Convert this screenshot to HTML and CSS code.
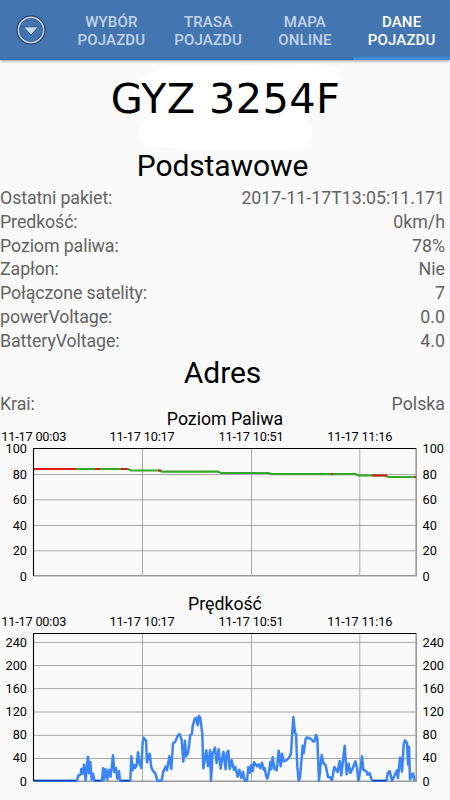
FILE: index.html
```html
<!DOCTYPE html>
<html lang="pl">
<head>
<meta charset="utf-8">
<title>Dane pojazdu</title>
<link rel="stylesheet" href="styles.css">
</head>
<body>
<header class="bar">
  <div class="menu">
    <svg width="32" height="32" viewBox="0 0 32 32">
      <circle cx="16" cy="16" r="12.8" fill="none" stroke="#1b3155" stroke-width="3.3"/>
      <circle cx="16" cy="16" r="12.6" fill="none" stroke="#c3d4e9" stroke-width="1.7"/>
      <path d="M8.5 12.8H23.5L16 21.2Z" fill="#c3d9ed" stroke="#294c78" stroke-width=".9"/>
    </svg>
  </div>
  <nav class="tabs">
    <a class="tab">WYBÓR<br>POJAZDU</a>
    <a class="tab">TRASA<br>POJAZDU</a>
    <a class="tab">MAPA<br>ONLINE</a>
    <a class="tab active">DANE<br>POJAZDU</a>
  </nav>
</header>
<main>
  <div class="plate">
    <svg class="patch" width="450" height="90" viewBox="0 60 450 90">
      <path d="M134 95C130 78 153 69 174 67L270 66Q315 62 330 66Q342 70 342 83Q342 95 318 97L314 110Q311 119 304 119Q312 123 312 134Q312 149 290 150H190Q178 147 151 147Q139 146 139 133Q139 120 150 117Q134 110 134 95Z" fill="#fff"/>
    </svg>
    <h1 class="number">GYZ 3254F</h1>
  </div>
  <h2 class="title">Podstawowe</h2>
  <dl class="list">
    <div class="row"><dt>Ostatni pakiet:</dt><dd>2017-11-17T13:05:11.171</dd></div>
    <div class="row"><dt>Predkość:</dt><dd>0km/h</dd></div>
    <div class="row"><dt>Poziom paliwa:</dt><dd>78%</dd></div>
    <div class="row"><dt>Zapłon:</dt><dd>Nie</dd></div>
    <div class="row"><dt>Połączone satelity:</dt><dd>7</dd></div>
    <div class="row"><dt>powerVoltage:</dt><dd>0.0</dd></div>
    <div class="row"><dt>BatteryVoltage:</dt><dd>4.0</dd></div>
  </dl>
  <h2 class="title address">Adres</h2>
  <dl class="list country">
    <div class="row"><dt>Krai:</dt><dd>Polska</dd></div>
  </dl>
  <svg class="chart" width="450" height="180" viewBox="0 410 450 180">
    <text class="name" x="225" y="425">Poziom Paliwa</text>
    <g class="time"><text x="33.7" y="441">11-17 00:03</text><text x="142" y="441">11-17 10:17</text><text x="251" y="441">11-17 10:51</text><text x="359.7" y="441">11-17 11:16</text></g>
    <g class="left"><text x="27" y="453">100</text><text x="27" y="478.5">80</text><text x="27" y="504">60</text><text x="27" y="529.5">40</text><text x="27" y="555">20</text><text x="27" y="580.5">0</text></g>
    <g class="right"><text x="422.5" y="453">100</text><text x="422.5" y="478.5">80</text><text x="422.5" y="504">60</text><text x="422.5" y="529.5">40</text><text x="422.5" y="555">20</text><text x="422.5" y="580.5">0</text></g>
    <path class="grid" d="M34 474.5H416M34 499.8H416M34 525.5H416M34 550.8H416M142.5 449V575M251.5 449V575M359.8 449V575"/>
    <path class="edge" d="M33 575.7H416.2V448"/>
    <path class="frame" d="M33.5 576V448.5H416"/>
    <path class="fuel" d="M34 469H128L131 470.5H160L162 471.7H218L221 473H269L271 474.1H356L358 475.5H386L388 477H416"/>
    <path class="fuel off" d="M34 469H76M95 469H100M121 469H127.5M158 470.5H161M331 474.1H332.5M372 475.5H387M414.5 477H416"/>
  </svg>
  <svg class="chart" width="450" height="210" viewBox="0 590 450 210">
    <text class="name" x="225" y="610">Prędkość</text>
    <g class="time"><text x="33.7" y="626">11-17 00:03</text><text x="142" y="626">11-17 10:17</text><text x="251" y="626">11-17 10:51</text><text x="359.7" y="626">11-17 11:16</text></g>
    <g class="left"><text x="27" y="646.5">240</text><text x="27" y="669.7">200</text><text x="27" y="692.8">160</text><text x="27" y="715.8">120</text><text x="27" y="739">80</text><text x="27" y="762">40</text><text x="27" y="785.5">0</text></g>
    <g class="right"><text x="422.5" y="646.5">240</text><text x="422.5" y="669.7">200</text><text x="422.5" y="692.8">160</text><text x="422.5" y="715.8">120</text><text x="422.5" y="739">80</text><text x="422.5" y="762">40</text><text x="422.5" y="785.5">0</text></g>
    <path class="grid" d="M34 642.4H416M34 665.5H416M34 688.6H416M34 712H416M34 735.4H416M34 758.5H416M142.5 634V781M251.5 634V781M359.8 634V781"/>
    <path class="edge" d="M33 781.2H416.2V633"/>
    <path class="frame" d="M33.5 781V633.5H416"/>
    <g transform="translate(0 590) scale(.33333)">
      <path class="speed" d="M102 572H231L235 557L242 553L244 537L248 551L252 524L257 572L260 533L264 500L267 550L271 516L275 569L279 551L284 572H306L309 535L312 569L317 537L322 569L327 539L332 560L339 496L343 546L348 534L352 566L357 544L360 572H391L394 499L398 541L402 524L405 534L410 526L414 487L419 521L424 534L428 456L431 443L438 452L441 517L449 491L454 532L459 543L466 550L472 572H485L490 544L497 530L501 541L508 499L514 537L519 460L526 455L533 437L539 432L545 450L550 515L555 452L558 499L564 490L571 435L576 431L578 409L584 387L589 383L593 406L597 378L601 384L607 432L610 535L619 481L624 529L630 481L633 572L638 490L645 473L650 519L656 478L662 536L670 485L677 538L680 489L685 482L689 537L695 511L702 540L706 531L713 560L718 539L724 564L729 546L734 571L741 572L745 531L750 548L754 525L758 543L762 517L771 529L776 523L781 535L786 518L791 539L794 534L798 556L802 566L807 545L811 516L814 538L818 502L824 537L830 541L836 482L842 529L846 491L851 514L859 511L868 502L873 490L877 425L880 381L885 429L888 431L892 530L896 572L900 564L908 467L911 490L917 446L922 442L933 447L940 455L944 452L948 435L952 445L957 572L965 495L970 519L977 526L984 562L990 561L996 571L1003 531L1009 540L1013 546L1019 513L1024 556L1034 467L1040 553L1046 521L1051 549L1059 533L1066 514L1072 539L1075 572L1081 540L1086 499L1090 539L1099 544L1103 554L1109 549L1116 572H1160L1163 550L1169 543L1176 572L1182 561L1191 541L1194 564L1200 503L1206 545L1211 464L1215 451L1221 459L1224 523L1227 470L1230 568L1239 550L1244 572"/>
      <path class="idle" d="M102 572H228M284 572H302M362 572H388M1118 572H1158"/>
    </g>
  </svg>
</main>
</body>
</html>
```
FILE: styles.css
```css
* { box-sizing: border-box; }
body { margin: 0; background: #fafafa; font-family: Roboto, sans-serif; color: #000; }
main { display: flex; flex-direction: column; height: 740px; overflow: hidden; }
.bar { display: flex; height: 60px; background: #4375b1; border-bottom: 1px solid #1e64ac; box-shadow: 0 1px 3px rgba(0,0,0,.4); position: relative; z-index: 1; }
.menu { width: 63px; padding: 14px 0 0 15px; }
.menu svg { display: block; }
.tabs { display: grid; grid-template-columns: repeat(4, 96.75px); height: 60px; }
.tab { padding-top: 13px; text-align: center; font-size: 15px; line-height: 18px; font-weight: 500; letter-spacing: .15px; color: #c3d3e7; }
.tab.active { color: #fff; border-bottom: 3px solid #4489d8; }
.plate { display: grid; height: 85px; flex: none; }
.plate > * { grid-area: 1 / 1; }
.patch { display: block; }
.number { margin: 15px 0 0 1px; text-align: center; font: 41.5px/48px "DejaVu Sans", sans-serif; letter-spacing: .35px; }
.title { margin: 0; flex: none; height: 41px; padding-right: 5px; text-align: center; font-weight: 400; font-size: 30px; line-height: 41px; letter-spacing: -.1px; }
.list { margin: 0; flex: none; height: 166.5px; font-size: 17.8px; color: #636363; }
.row { display: flex; justify-content: space-between; height: 23.75px; line-height: 23px; padding-right: 5px; }
.row dt { letter-spacing: -.1px; }
.row dd { margin: 0; }
.address { height: 39.5px; line-height: 40px; }
.country { height: 18px; }
.country .row { line-height: 24px; }
.chart { display: block; flex: none; font-family: Roboto, sans-serif; font-size: 13px; }
.name { font-size: 17.7px; text-anchor: middle; }
.time { text-anchor: middle; font-size: 12.7px; letter-spacing: -.16px; }
.left { text-anchor: end; font-size: 12.7px; }
.right { font-size: 12.7px; }
.grid { fill: none; stroke: #808080; stroke-opacity: .65; stroke-width: 1; }
.edge { fill: none; stroke: #999; stroke-width: 1.6; }
.frame { fill: none; stroke: #000; stroke-width: 1.1; }
.fuel { fill: none; stroke: #36a72c; stroke-width: 2.2; }
.fuel.off { stroke: #e01818; }
.speed { fill: none; stroke: #3b84f5; stroke-width: 7.5; stroke-linejoin: round; }
.idle { fill: none; stroke: #1639b0; stroke-width: 4; }
```
